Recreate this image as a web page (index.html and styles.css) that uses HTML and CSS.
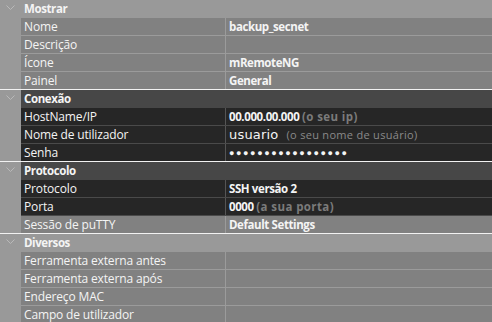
FILE: index.html
```html
<!DOCTYPE html>
<html lang="pt">
<head>
    <meta charset="UTF-8">
    <title>Propriedades da ligação</title>
    <link rel="stylesheet" href="styles.css">
</head>
<body>
    <div class="grid">
        <!-- Mostrar -->
        <section class="group">
            <div class="gutter">
                <svg class="chevron" width="9" height="6" viewBox="0 0 9 6"><polyline points="0.5,0.5 4.5,4.5 8.5,0.5" fill="none" stroke="#b9b9b9" stroke-width="1"/></svg>
            </div>
            <div class="rows">
                <div class="head">Mostrar</div>
                <div class="row"><span class="name">Nome</span><span class="value">backup_secnet</span></div>
                <div class="row"><span class="name">Descrição</span><span class="value"></span></div>
                <div class="row"><span class="name">Ícone</span><span class="value">mRemoteNG</span></div>
                <div class="row"><span class="name">Painel</span><span class="value">General</span></div>
            </div>
        </section>

        <!-- Conexão -->
        <section class="group active">
            <div class="gutter">
                <svg class="chevron" width="9" height="6" viewBox="0 0 9 6"><polyline points="0.5,0.5 4.5,4.5 8.5,0.5" fill="none" stroke="#b9b9b9" stroke-width="1"/></svg>
            </div>
            <div class="rows">
                <div class="head">Conexão</div>
                <div class="row dark"><span class="name">HostName/IP</span><span class="value">00.000.00.000 <em class="hint">(o seu ip)</em></span></div>
                <div class="row dark"><span class="name">Nome de utilizador</span><span class="value"><span class="typed">usuario</span><em class="hint thin">(o seu nome de usuário)</em></span></div>
                <div class="row dark"><span class="name">Senha</span><span class="value dots">●●●●●●●●●●●●●●●●●</span></div>
            </div>
        </section>

        <!-- Protocolo -->
        <section class="group active">
            <div class="gutter">
                <svg class="chevron" width="9" height="6" viewBox="0 0 9 6"><polyline points="0.5,0.5 4.5,4.5 8.5,0.5" fill="none" stroke="#b9b9b9" stroke-width="1"/></svg>
            </div>
            <div class="rows">
                <div class="head">Protocolo</div>
                <div class="row dark"><span class="name">Protocolo</span><span class="value">SSH versão 2</span></div>
                <div class="row dark"><span class="name">Porta</span><span class="value">0000 <em class="hint">(a sua porta)</em></span></div>
                <div class="row"><span class="name">Sessão de puTTY</span><span class="value">Default Settings</span></div>
            </div>
        </section>

        <!-- Diversos -->
        <section class="group last">
            <div class="gutter">
                <svg class="chevron" width="9" height="6" viewBox="0 0 9 6"><polyline points="0.5,0.5 4.5,4.5 8.5,0.5" fill="none" stroke="#b9b9b9" stroke-width="1"/></svg>
            </div>
            <div class="rows">
                <div class="head">Diversos</div>
                <div class="row"><span class="name">Ferramenta externa antes</span><span class="value"></span></div>
                <div class="row"><span class="name">Ferramenta externa após</span><span class="value"></span></div>
                <div class="row"><span class="name">Endereço MAC</span><span class="value"></span></div>
                <div class="row"><span class="name">Campo de utilizador</span><span class="value"></span></div>
            </div>
        </section>
    </div>
</body>
</html>
```

FILE: styles.css
```css
:root {
    --gutter: #999999;
    --row-grey: #818181;
    --line-grey: #9b9b9b;
    --row-dark: #262626;
    --line-dark: #4a4a4a;
    --head-dark: #474747;
    --text: #f4f4f4;
}

body {
    margin: 0;
    background: var(--row-grey);
    font-family: "Open Sans", "Noto Sans", sans-serif;
    font-size: 12px;
    color: var(--text);
    overflow: hidden;
}

.grid {
    width: 492px;
}

.group {
    display: flex;
    border-bottom: 1px solid #f2f2f2;
}

.group.last {
    border-bottom: none;
}

.gutter {
    width: 21px;
    flex: none;
    background: var(--gutter);
}

.chevron {
    display: block;
    margin: 5px 0 0 6px;
}

.rows {
    flex: 1;
}

.head {
    height: 18px;
    line-height: 17px;
    padding-left: 3px;
    font-weight: 700;
    font-size: 11.5px;
    letter-spacing: -0.4px;
    background: var(--gutter);
}

.group.active .head {
    background: var(--head-dark);
}

.row {
    display: grid;
    grid-template-columns: 205px 1fr;
    height: 17px;
    line-height: 17px;
    background: var(--row-grey);
    border-top: 1px solid var(--line-grey);
    white-space: nowrap;
}

.head + .row {
    border-top: none;
}

.name {
    padding-left: 3px;
    letter-spacing: -0.15px;
    border-right: 1px solid var(--line-grey);
}

.value {
    padding-left: 3px;
    font-weight: 700;
    font-size: 11.5px;
    letter-spacing: -0.4px;
}

.row.dark {
    background: var(--row-dark);
    border-top-color: var(--line-dark);
}

.row.dark .name {
    border-right-color: #555555;
}

.row.dark + .row:not(.dark) {
    border-top-color: var(--line-dark);
}

.hint {
    font-style: normal;
    color: #7b7b7b;
    letter-spacing: 0.4px;
}

.hint.thin {
    font-weight: 400;
    font-size: 11px;
    letter-spacing: 0.3px;
    color: #8a8a8a;
    margin-left: 8px;
}

.typed {
    font-family: "DejaVu Sans", sans-serif;
    font-weight: 400;
    font-size: 13px;
    letter-spacing: 0.2px;
}

.dots {
    font-size: 9px;
    letter-spacing: 1.6px;
}
```
